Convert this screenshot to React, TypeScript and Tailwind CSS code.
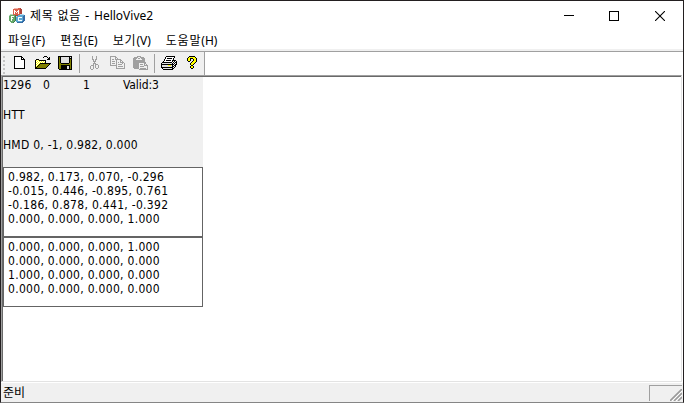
import React from "react";

const COLORS: Record<string, string> = {
  K: "#000000", W: "#ffffff", Y: "#ffff00", O: "#808000", G: "#a0a0a0", L: "#e0e0e0", S: "#c8c8c8",
  R: "#d9604c", r: "#ac4238", E: "#64a868", e: "#3c7a50", B: "#5ba8d4", b: "#356aa4", P: "#f0b4aa", M: "#b4d8b8", C: "#b8dcf0",
};

function Pixels({ rows, className = "" }: { rows: string[]; className?: string }) {
  const w = Math.max(...rows.map((r) => r.length));
  return (
    <svg width={w} height={rows.length} viewBox={`0 0 ${w} ${rows.length}`} shapeRendering="crispEdges" className={`shrink-0 ${className}`}>
      {rows.flatMap((row, y) =>
        row.split("").map((c, x) => (c === "." ? null : <rect key={`${x}-${y}`} x={x} y={y} width={1} height={1} fill={COLORS[c]} />)),
      )}
    </svg>
  );
}

const APP = [
  ".....PPPPRRr....",
  "....RRRRRRRrr...",
  "....RWRRRWRrr...",
  "....RWWRWWRrr...",
  "....RWRWRWRrr...",
  "....RWRRRWRrr...",
  ".MMMRRRRRRRCCCC.",
  "MEEEEEerrBBBBBBb",
  "EEWWWEeCBBBBBBbb",
  "EEWEEEeBBWWWWBbb",
  "EEWWEEeBBWBBBBbb",
  "EEWEEEeBBWBBBBbb",
  "EEWEEEeBBWWWWBbb",
  ".EEEEe.BBBBBBbb.",
  "..EEe...bbbbbb..",
];
const NEW = [
  "KKKKKKKK...", "KWWWWWWKK..", "KWWWWWWKWK.", "KWWWWWWKKKK", "KWWWWWWWWWK", "KWWWWWWWWWK", "KWWWWWWWWWK",
  "KWWWWWWWWWK", "KWWWWWWWWWK", "KWWWWWWWWWK", "KWWWWWWWWWK", "KWWWWWWWWWK", "KKKKKKKKKKK",
];
const OPEN = [
  ".........KKK....", "........K...K.K.", ".............KK.", ".KKK........KKK.", "KYWYKKKKKKK.....", "KWYWYWYWYWK.....",
  "KYWYWYWYWYK.....", "KWYWYKKKKKKKKKKK", "KYWYKOOOOOOOOOK.", "KWYKOOOOOOOOOK..", "KYKOOOOOOOOOK...", "KKOOOOOOOOOK....", "KKKKKKKKKKK.....",
];
const SAVE = [
  "KKKKKKKKKKKKKK", "KOKLLLLLLLLKLK", "KOKLLLLLLLLKKK", "KOKLLLLLLLLKOK", "KOKLLLLLLLLKOK", "KOKLLLLLLLLKOK", "KOKLLLLLLLLKOK",
  "KOOKKKKKKKKOOK", "KOOOOOOOOOOOOK", "KOOKKKKKKKKKOK", "KOOKKKKKKLLKOK", "KOOKKKKKKLLKOK", "KOOKKKKKKLLKOK", ".KKKKKKKKKKKKK",
];
const CUT = [
  "..G...G..", "..G...G..", "..G...G..", "..GG.GG..", "...G.G...", "...GGG...", "....G....", "...GGG...",
  "...G.GGG.", ".GGG.G..G", "G..G.G..G", "G..G.G..G", "G..G..GG.", ".GG......",
];
const COPY = [
  "GGGGGG.........", "G....GG........", "G....G.G.......", "G.GG.GGGGGG....", "G.....G...GG...", "G.GGG.G...G.G..", "G.....G.G.GGGG.",
  "G.GGG.G.....G.G", "G.....G.GGGG..G", "GGGGGGG.......G", "......G.GGGGG.G", "......G.......G", "......GGGGGGGGG",
];
const PASTE = [
  "....GGGG.......", ".GGGG..GGGG....", "GGGG.GG.GGGG...", "GGG......GGG...", "GGGGGGGGGGGG...", "GGGGGGGGGGGG...", "GGGGGGGGGGGGG..",
  "GGGGGG.....GG..", "GGGGGG.GGG.G.G.", "GGGGGG.....GGGG", "GGGGGG.GGGG...G", "GGGGGG........G", ".GGGGG.GGGGGG.G", "......GGGGGGGGG",
];
const PRINT = [
  ".....KKKKKKKKK..", "....KWWWWWWWWK..", "....KWKKKKKWK...", "...KWWWWWWWWK...", "...KWKKKKKWKKKK.", "..KWWWWWWWWK.K.K", ".KKKKKKKKKK.K.KK",
  "KLLLLLLLLLLK.K.K", "KKKKKKKKKKKKK.KK", "KLLLLLLYYYLK.KK.", "KLLLLLLLLLLKK.K.", "KKKKKKKKKKKK.K..", ".KLLLLLLLLLKK...", "..KKKKKKKKKK....",
];
const HELP = [
  "..KKKKKK..", ".KYYYYYYK.", "KYYKKKYYYK", "KYYK..KYYK", "KYYK..KYYK", ".KK..KYYYK", "....KYYYK.", "...KYYYK..", "...KYYK...", "....KK....", "...KYYK...", "...KYYK...", "....KK....",
];

const ui = "[font-family:'Noto_Sans','Noto_Sans_CJK_KR',sans-serif]";
const body = "[font-family:'DejaVu_Sans_Condensed','DejaVu_Sans',sans-serif] [font-stretch:condensed] text-[12px] tracking-[0.3px]";

const MENUS = [["파일", "(F)"], ["편집", "(E)"], ["보기", "(V)"], ["도움말", "(H)"]];

function Matrix({ lines }: { lines: string[] }) {
  return (
    <div className="h-[70px] w-[200px] border border-[#646464] bg-white pl-[4px] pt-[2px]">
      {lines.map((line, i) => (
        <div key={i} className="h-[14px] whitespace-nowrap leading-[14px]">{line}</div>
      ))}
    </div>
  );
}

function Toolbar() {
  return (
    <div className="flex h-[23px] w-[204px] shrink-0 items-start border-r border-[#a0a0a0] bg-[#f0f0f0] pl-[2px] pt-[4px]">
      <div className="mr-[9px] flex w-[2px] flex-col gap-[2px]">
        {[0, 1, 2, 3, 4].map((i) => <div key={i} className="size-[2px] bg-[#c4c4c4]" />)}
      </div>
      <Pixels rows={NEW} className="mr-[10px]" />
      <Pixels rows={OPEN} className="mr-[7px]" />
      <Pixels rows={SAVE} className="mr-[7px]" />
      <div className="-mt-[2px] mr-[10px] h-[19px] w-px bg-[#a0a0a0]" />
      <Pixels rows={CUT} className="mr-[11px]" />
      <Pixels rows={COPY} className="mr-[8px]" />
      <Pixels rows={PASTE} className="mr-[6px]" />
      <div className="-mt-[2px] mr-[6px] h-[19px] w-px bg-[#a0a0a0]" />
      <Pixels rows={PRINT} className="mr-[10px]" />
      <Pixels rows={HELP} />
    </div>
  );
}

export default function App() {
  return (
    <div className={`flex h-[403px] w-[684px] flex-col overflow-hidden border border-[#231f20] border-b-[#858585] bg-white text-black ${ui}`}>
      <header className="flex h-[29px] shrink-0 items-center pl-[8px]">
        <Pixels rows={APP} className="-mt-px mr-[5px]" />
        <h1 className="flex-1 whitespace-nowrap text-[12px] leading-[16px] [word-spacing:0.6px]">
          <span className="tracking-[0.6px]">제목 없음 - </span>HelloVive2
        </h1>
        <div className="mr-[18px] flex items-center gap-[35px]">
          <div className="h-px w-[10px] bg-black" />
          <div className="size-[10px] border border-black" />
          <svg width="10" height="10" viewBox="0 0 10 10" className="ml-px"><path d="M0 0l10 10m0-10l-10 10" stroke="black" strokeWidth="1.1" /></svg>
        </div>
      </header>
      <nav className="flex h-[19px] shrink-0 items-center gap-[15px] whitespace-nowrap pl-[7px] pt-[2px] text-[12px] leading-[18px]">
        {MENUS.map(([label, key]) => (
          <span key={key}><span className="tracking-[0.8px]">{label}</span>{key}</span>
        ))}
      </nav>
      <div className="h-[3px] shrink-0 border-b border-[#a0a0a0] bg-[#f0f0f0]" />
      <Toolbar />
      <main className="flex h-[308px] shrink-0 border-b border-r border-white">
        <div className="flex-1 border border-b-[#e3e3e3] border-l-[#a0a0a0] border-r-[#e3e3e3] border-t-[#a0a0a0]">
          <div className={`h-full border-l border-t border-[#696969] ${body}`}>
            <section className="h-[90px] w-[200px] bg-[#f0f0f0] pt-px leading-[15px]">
              <div className="flex h-[30px]"><span className="w-[40px]">1296</span><span className="w-[40px]">0</span><span className="w-[40px]">1</span><span className="tracking-[-0.1px]">Valid:3</span></div>
              <div className="h-[30px]">HTT</div>
              <div className="tracking-[0.25px]">HMD 0, -1, 0.982, 0.000</div>
            </section>
            <Matrix lines={["0.982, 0.173, 0.070, -0.296", "-0.015, 0.446, -0.895, 0.761", "-0.186, 0.878, 0.441, -0.392", "0.000, 0.000, 0.000, 1.000"]} />
            <Matrix lines={["0.000, 0.000, 0.000, 1.000", "0.000, 0.000, 0.000, 0.000", "1.000, 0.000, 0.000, 0.000", "0.000, 0.000, 0.000, 0.000"]} />
          </div>
        </div>
      </main>
      <footer className="flex h-[19px] shrink-0 items-start justify-between bg-[#f0f0f0] pl-[2px] pr-[1px] text-[12px] leading-[19px]">
        <span>준비</span>
        <div className="mt-[2px] flex h-[16px] w-[33px] items-end justify-end border-l border-t border-[#a0a0a0]">
          <svg width="12" height="12" viewBox="0 0 12 12"><path d="M0 12L12 0M4 12L12 4M8 12L12 8" stroke="#9a9a9a" strokeWidth="1.6" /><path d="M2 12L12 2M6 12l6-6" stroke="#fff" /></svg>
        </div>
      </footer>
    </div>
  );
}
